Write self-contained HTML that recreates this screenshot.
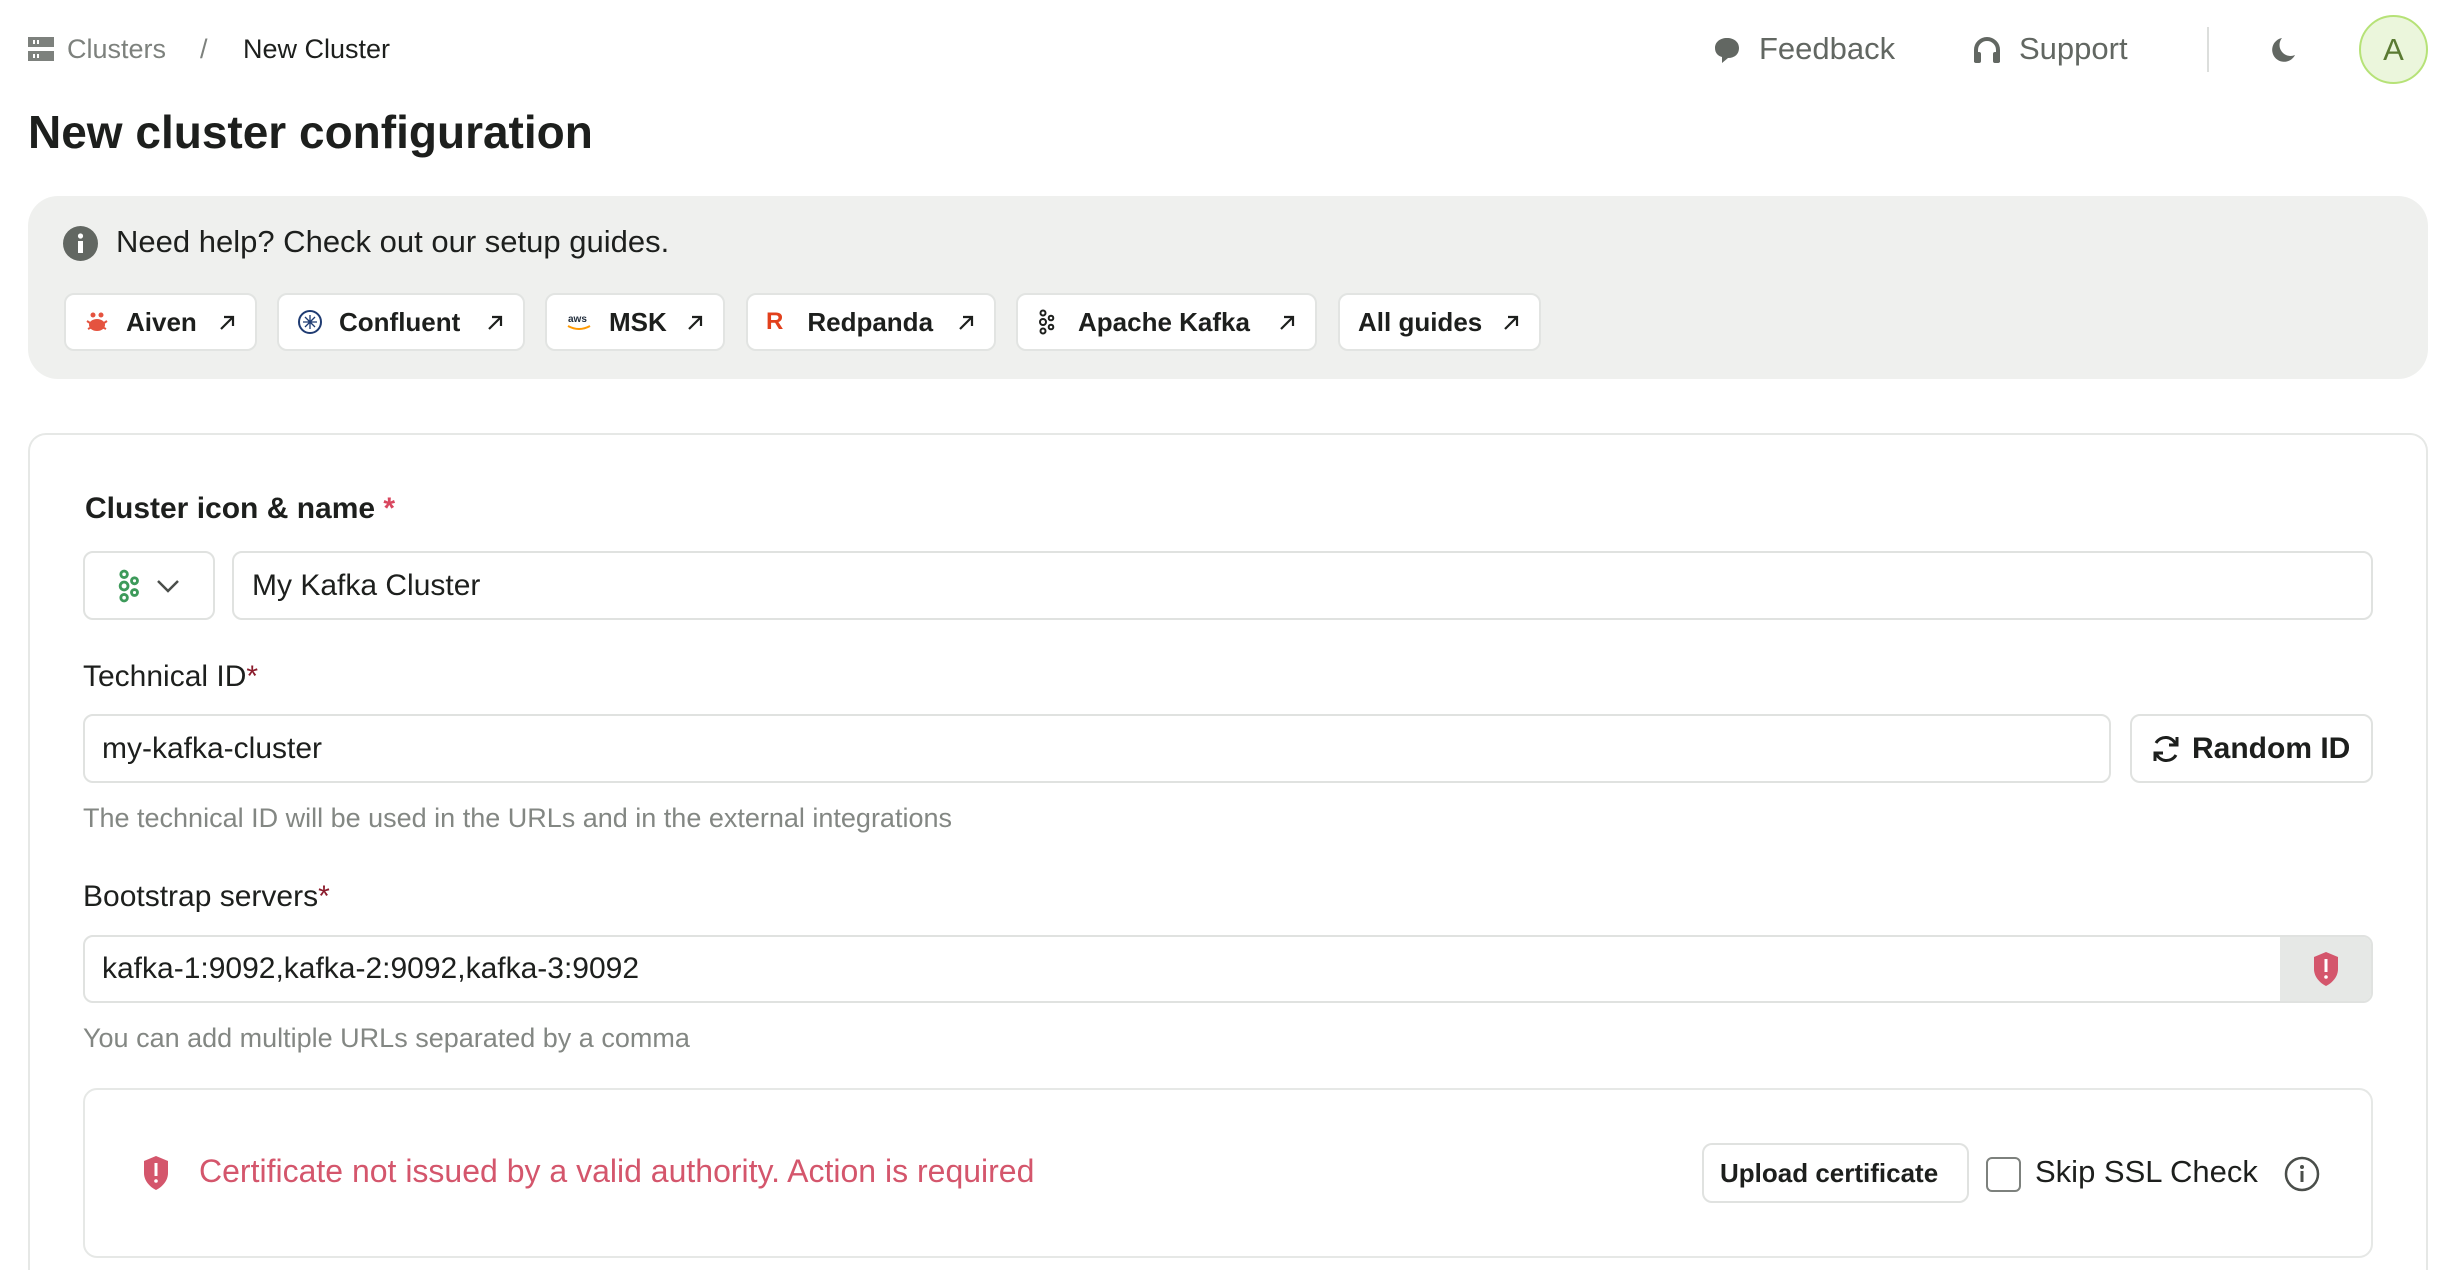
<!DOCTYPE html>
<html style="width:2456px;height:1270px;overflow:hidden"><head><meta charset="utf-8"><style>
*{box-sizing:border-box;margin:0;padding:0}
body{width:2456px;height:1270px;overflow:hidden;background:#fff;font-family:"Liberation Sans",sans-serif;color:#1d1f1d;position:relative}
.a{position:absolute;white-space:nowrap}
.chip{position:absolute;top:293px;height:58px;background:#fff;border:2px solid #e2e4e2;border-radius:10px;display:flex;align-items:center;font-weight:bold;font-size:26px;padding-left:18px}
.chip .ar{position:absolute;right:18px;top:18px}
.inp{position:absolute;border:2px solid #e0e2e0;border-radius:10px;background:#fff;display:flex;align-items:center;font-size:30px}
.lbl{position:absolute;font-size:30px;font-weight:bold;color:#1d1f1d;white-space:nowrap}
.star{color:#8b1c2c}
.help{position:absolute;font-size:27px;color:#838783;white-space:nowrap}
</style></head><body>

<svg width="0" height="0" style="position:absolute"><defs><symbol id="arr" viewBox="0 0 20 20"><path d="M4 16L16 4M7 4h9v9" fill="none" stroke="#1d1f1d" stroke-width="2.2"/></symbol></defs></svg>

<svg class="a" style="left:28px;top:37px" width="26" height="24" viewBox="0 0 26 24"><rect width="26" height="10" fill="#7d817d"/><rect y="14" width="26" height="10" fill="#7d817d"/><rect x="5" y="3" width="2" height="4" fill="#fff"/><rect x="9" y="3" width="2" height="4" fill="#fff"/><rect x="5" y="17" width="2" height="4" fill="#fff"/><rect x="9" y="17" width="2" height="4" fill="#fff"/></svg>
<div class="a" style="left:67px;top:34px;font-size:27px;color:#7d817d">Clusters</div>
<div class="a" style="left:200px;top:34px;font-size:27px;color:#7d817d">/</div>
<div class="a" style="left:243px;top:34px;font-size:27px;color:#1d1f1d">New Cluster</div>

<svg class="a" style="left:1713px;top:36px" width="28" height="28" viewBox="0 0 28 28"><path d="M14 2C7 2 2 6 2 12c0 5 3 8 7 9l0 6 6-5c7 0 11-4 11-10C26 6 21 2 14 2z" fill="#626762"/></svg>
<div class="a" style="left:1759px;top:31px;font-size:31px;color:#626762">Feedback</div>
<svg class="a" style="left:1972px;top:36px" width="30" height="28" viewBox="0 0 30 28"><path d="M4 26V14a11 11 0 0 1 22 0v12" fill="none" stroke="#626762" stroke-width="4"/><rect x="2" y="16" width="7" height="11" rx="2" fill="#626762"/><rect x="21" y="16" width="7" height="11" rx="2" fill="#626762"/></svg>
<div class="a" style="left:2019px;top:31px;font-size:31px;color:#626762">Support</div>
<div class="a" style="left:2207px;top:27px;width:2px;height:45px;background:#dcdedc"></div>
<svg class="a" style="left:2268px;top:36px" width="28" height="28" viewBox="0 0 28 28"><path d="M14 2A12 12 0 1 0 27 19 11 11 0 0 1 14 2z" fill="#626762"/></svg>
<div class="a" style="left:2359px;top:15px;width:69px;height:69px;border-radius:50%;background:#ebf6dc;border:2px solid #b6e277;color:#5a7a32;font-size:31px;text-align:center;line-height:65px">A</div>

<div class="a" style="left:28px;top:105px;font-size:46px;font-weight:bold;color:#1d1f1d">New cluster configuration</div>

<div class="a" style="left:28px;top:196px;width:2400px;height:183px;background:#eff0ee;border-radius:30px"></div>
<svg class="a" style="left:63px;top:226px" width="35" height="35" viewBox="0 0 35 35"><circle cx="17.5" cy="17.5" r="17.5" fill="#626762"/><circle cx="17.5" cy="10" r="2.6" fill="#fff"/><rect x="15" y="15" width="5" height="12" fill="#fff"/></svg>
<div class="a" style="left:116px;top:224px;font-size:31px;color:#1d1f1d">Need help? Check out our setup guides.</div>

<div class="chip" style="left:64px;width:193px"><svg width="26" height="26" viewBox="0 0 26 26"><ellipse cx="13" cy="16" rx="8" ry="6" fill="#e5533f"/><circle cx="9" cy="6" r="2.5" fill="#e5533f"/><circle cx="17" cy="6" r="2.5" fill="#e5533f"/><path d="M3 12l3 2M23 12l-3 2M4 20l4-2M22 20l-4-2" stroke="#e5533f" stroke-width="2"/></svg><span style="margin-left:16px">Aiven</span><svg class="ar" width="20" height="20"><use href="#arr"/></svg></div>
<div class="chip" style="left:277px;width:248px"><svg width="26" height="26" viewBox="0 0 26 26"><circle cx="13" cy="13" r="11" fill="none" stroke="#1f3b72" stroke-width="2"/><path d="M13 6v14M6 13h14M8 8l10 10M18 8L8 18" stroke="#1f3b72" stroke-width="1.3"/></svg><span style="margin-left:16px">Confluent</span><svg class="ar" width="20" height="20"><use href="#arr"/></svg></div>
<div class="chip" style="left:545px;width:180px"><svg width="30" height="26" viewBox="0 0 30 26"><text x="3" y="13" font-size="10" fill="#232f3e" font-family="Liberation Sans">aws</text><path d="M3 17q11 6 22 0" fill="none" stroke="#f90" stroke-width="2"/></svg><span style="margin-left:14px">MSK</span><svg class="ar" width="20" height="20"><use href="#arr"/></svg></div>
<div class="chip" style="left:746px;width:250px"><span style="color:#e2401c;font-weight:bold;font-size:24px">R</span><span style="margin-left:24px">Redpanda</span><svg class="ar" width="20" height="20"><use href="#arr"/></svg></div>
<div class="chip" style="left:1016px;width:301px"><svg width="20" height="26" viewBox="0 0 20 26"><g fill="none" stroke="#1d1f1d" stroke-width="2"><circle cx="7" cy="4" r="2.5"/><circle cx="7" cy="13" r="3"/><circle cx="7" cy="22" r="2.5"/><circle cx="15" cy="9" r="2.3"/><circle cx="15" cy="18" r="2.3"/></g></svg><span style="margin-left:22px">Apache Kafka</span><svg class="ar" width="20" height="20"><use href="#arr"/></svg></div>
<div class="chip" style="left:1338px;width:203px"><span>All guides</span><svg class="ar" width="20" height="20"><use href="#arr"/></svg></div>

<div class="a" style="left:28px;top:433px;width:2400px;height:837px;border:2px solid #e6e8e6;border-bottom:none;border-radius:18px 18px 0 0"></div>

<div class="lbl" style="left:85px;top:492px">Cluster icon &amp; name <span style="color:#d9475f">*</span></div>
<div class="inp" style="left:83px;top:551px;width:132px;height:69px;padding-left:30px"><svg width="26" height="36" viewBox="0 0 20 26"><g fill="none" stroke="#3d9a5a" stroke-width="2.2"><circle cx="7" cy="4" r="2.5"/><circle cx="7" cy="13" r="3"/><circle cx="7" cy="22" r="2.5"/><circle cx="15" cy="9" r="2.3"/><circle cx="15" cy="18" r="2.3"/></g></svg><svg style="margin-left:14px" width="26" height="16" viewBox="0 0 26 16"><path d="M3 3l10 10L23 3" fill="none" stroke="#4a4e4a" stroke-width="2.5"/></svg></div>
<div class="inp" style="left:232px;top:551px;width:2141px;height:69px;padding-left:18px">My Kafka Cluster</div>

<div class="lbl" style="left:83px;top:660px;font-weight:normal;color:#1d1f1d">Technical ID<span class="star">*</span></div>
<div class="inp" style="left:83px;top:714px;width:2028px;height:69px;padding-left:17px">my-kafka-cluster</div>
<div class="inp" style="left:2130px;top:714px;width:243px;height:69px;padding-left:18px;font-weight:bold"><svg width="32" height="32" viewBox="0 0 32 32"><path d="M26 12A11 11 0 0 0 6 10M6 20a11 11 0 0 0 20 2" fill="none" stroke="#1d1f1d" stroke-width="3"/><path d="M27 4v8h-8M5 28v-8h8" fill="none" stroke="#1d1f1d" stroke-width="3"/></svg><span style="margin-left:10px">Random ID</span></div>
<div class="help" style="left:83px;top:803px">The technical ID will be used in the URLs and in the external integrations</div>

<div class="lbl" style="left:83px;top:880px;font-weight:normal">Bootstrap servers<span class="star">*</span></div>
<div class="inp" style="left:83px;top:935px;width:2290px;height:68px;padding-left:17px;overflow:hidden">kafka-1:9092,kafka-2:9092,kafka-3:9092<div style="position:absolute;right:0;top:0;width:91px;height:100%;background:#e6e8e6;display:flex;align-items:center;justify-content:center"><svg width="26" height="36" viewBox="0 0 26 36"><path d="M13 1L25 6v12c0 8-6 14-12 17C7 32 1 26 1 18V6z" fill="#d4566c"/><rect x="11.5" y="8" width="3" height="13" fill="#fff"/><circle cx="13" cy="26" r="1.8" fill="#fff"/></svg></div></div>
<div class="help" style="left:83px;top:1023px">You can add multiple URLs separated by a comma</div>

<div class="a" style="left:83px;top:1088px;width:2290px;height:170px;border:2px solid #e6e8e6;border-radius:14px"></div>
<svg class="a" style="left:140px;top:1155px" width="32" height="36" viewBox="0 0 26 36"><path d="M13 1L25 6v12c0 8-6 14-12 17C7 32 1 26 1 18V6z" fill="#d4566c"/><rect x="11.5" y="8" width="3" height="13" fill="#fff"/><circle cx="13" cy="26" r="1.8" fill="#fff"/></svg>
<div class="a" style="left:199px;top:1153px;font-size:32px;color:#d4566c">Certificate not issued by a valid authority. Action is required</div>
<div class="inp" style="left:1702px;top:1143px;width:267px;height:60px;padding-left:16px;font-size:26px;font-weight:bold">Upload certificate</div>
<div class="a" style="left:1986px;top:1157px;width:35px;height:35px;border:2px solid #7d817d;border-radius:6px"></div>
<div class="a" style="left:2035px;top:1154px;font-size:31px;color:#1d1f1d">Skip SSL Check</div>
<svg class="a" style="left:2284px;top:1156px" width="36" height="36" viewBox="0 0 36 36"><circle cx="18" cy="18" r="16" fill="none" stroke="#4a4e4a" stroke-width="2.5"/><circle cx="18" cy="11" r="2" fill="#4a4e4a"/><rect x="16.5" y="15" width="3" height="11" fill="#4a4e4a"/></svg>
</body></html>
